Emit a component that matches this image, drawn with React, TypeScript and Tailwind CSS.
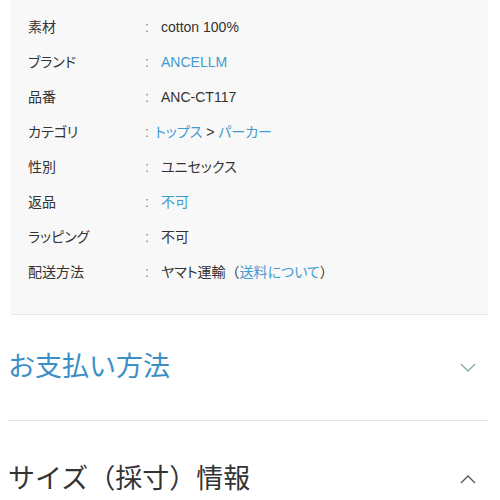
const rows: { label: string; value: React.ReactNode; tight?: boolean }[] = [
  { label: "素材", value: "cotton 100%" },
  { label: "ブランド", value: <span className="text-[#3f9bd0]">ANCELLM</span> },
  { label: "品番", value: "ANC-CT117" },
  {
    label: "カテゴリ",
    tight: true,
    value: (
      <>
        <span className="text-[#3f9bd0]">トップス</span>
        <span className="text-[#333]"> &gt; </span>
        <span className="text-[#3f9bd0]">パーカー</span>
      </>
    ),
  },
  { label: "性別", value: "ユニセックス" },
  { label: "返品", value: <span className="text-[#3f9bd0]">不可</span> },
  { label: "ラッピング", value: "不可" },
  {
    label: "配送方法",
    value: (
      <>
        ヤマト運輸
        <span className="[font-feature-settings:normal]">（</span>
        <span className="text-[#3f9bd0]">送料について</span>
        <span className="[font-feature-settings:normal]">）</span>
      </>
    ),
  },
];

function Chevron({ up, color }: { up?: boolean; color: string }) {
  return (
    <svg width="16" height="10" viewBox="0 0 16 10" fill="none">
      <path
        d={up ? "M1 9 L8 2 L15 9" : "M1 1 L8 8 L15 1"}
        stroke={color}
        strokeWidth="1.3"
      />
    </svg>
  );
}

export default function App() {
  return (
    <div
      className="w-[500px] h-[500px] overflow-hidden bg-white"
      style={{ fontFamily: '"Liberation Sans", "Noto Sans CJK JP", sans-serif' }}
    >
      {/* 商品情報 */}
      <div className="ml-[11px] mr-[12px] bg-[#f8f8f8] border-b border-[#e6e6e6] pt-[10px] pb-[24px] pl-[17px] [font-feature-settings:'palt']">
        {rows.map((r) => (
          <div key={r.label} className="flex items-center h-[35px] text-[14px] text-[#333]">
            <span className="w-[117px]">{r.label}</span>
            <span className={r.tight ? "w-[10px] text-[#888]" : "w-[16px] text-[#888]"}>:</span>
            <span>{r.value}</span>
          </div>
        ))}
      </div>

      {/* お支払い方法 */}
      <div className="ml-[8px] mr-[12px] h-[106px] flex items-center justify-between border-b border-[#e4e4e4] pr-[12px]">
        <span className="text-[27px] text-[#3b8fc7]">お支払い方法</span>
        <Chevron color="#86a9ad" />
      </div>

      {/* サイズ */}
      <div className="ml-[8px] mr-[12px] pt-[38px] flex items-center justify-between pr-[12px]">
        <span className="text-[27px] text-[#333]">サイズ（採寸）情報</span>
        <Chevron up color="#555" />
      </div>
    </div>
  );
}
